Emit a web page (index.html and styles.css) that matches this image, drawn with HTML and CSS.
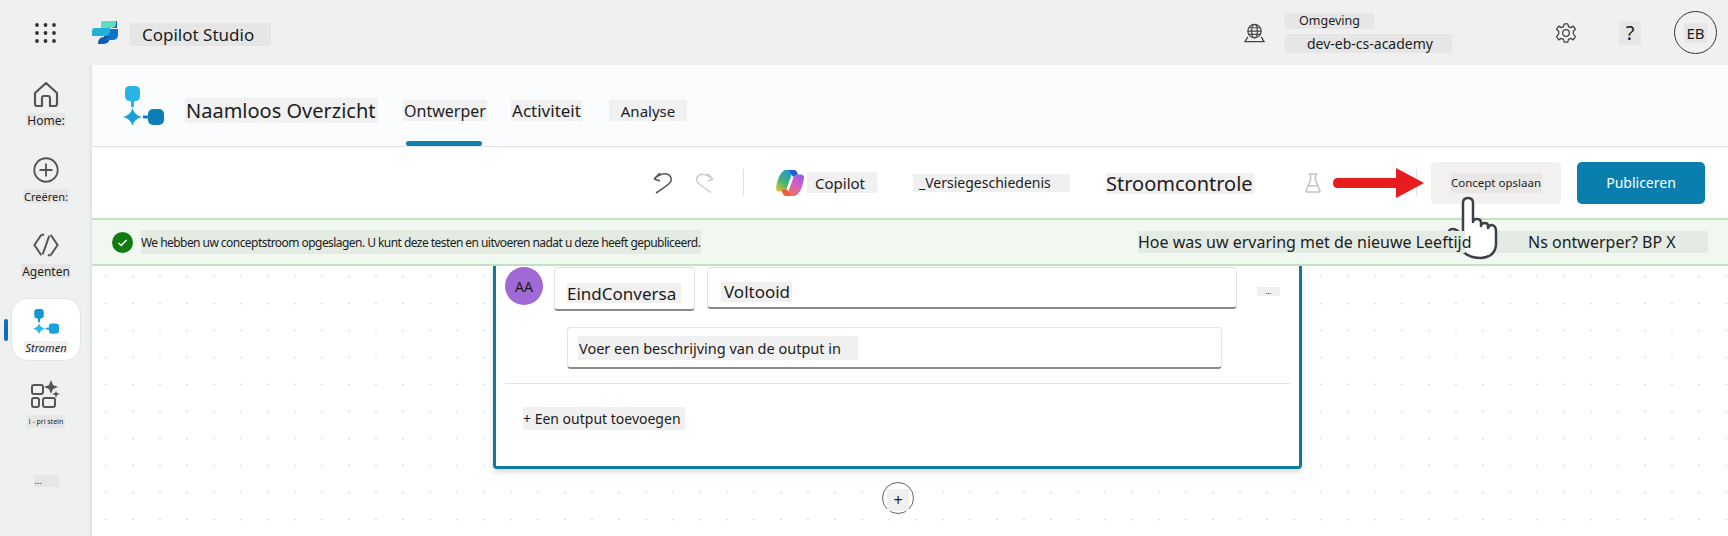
FILE: index.html
```html
<!DOCTYPE html>
<html lang="en">
<head>
    <meta charset="UTF-8">
    <meta name="viewport" content="width=device-width, initial-scale=1.0">
    <title>Copilot Studio</title>
    <link rel="stylesheet" href="styles.css">
</head>
<body>
    <header class="topbar">
        <svg class="waffle" viewBox="0 0 21 20" fill="#333">
            <circle cx="2" cy="2" r="1.9"/><circle cx="10.5" cy="2" r="1.9"/><circle cx="19" cy="2" r="1.9"/>
            <circle cx="2" cy="10" r="1.9"/><circle cx="10.5" cy="10" r="1.9"/><circle cx="19" cy="10" r="1.9"/>
            <circle cx="2" cy="18" r="1.9"/><circle cx="10.5" cy="18" r="1.9"/><circle cx="19" cy="18" r="1.9"/>
        </svg>
        <svg class="brand-logo" viewBox="0 0 26 23">
            <path d="M10 1 Q10 0 11 0 H25 V7 H18 V16 Q18 23 11 23 H6 Q6 16 12 16 V8 H10 Z" fill="#0a5cb4"/>
            <path d="M17 8 H26 V14 Q26 19 20 19 H14 Q17 16 17 13 Z" fill="#0b74c9"/>
            <path d="M9 2 Q9 0 11 0 H24 V3 Q24 7 19 7 H9 Z" fill="#5fdcc4"/>
            <path d="M3 7 H18 V10 Q18 15 13 15 H0 V10 Q0 7 3 7 Z" fill="#1fb3da"/>
        </svg>
        <span class="lbl brand-name">Copilot Studio</span>
        <svg class="globe" viewBox="0 0 22 20" fill="none" stroke="#444" stroke-width="1.3">
            <circle cx="11" cy="8" r="7"/>
            <ellipse cx="11" cy="8" rx="3" ry="7"/>
            <path d="M4 8 H18 M5 4.5 H17 M5 11.5 H17"/>
            <path d="M4 14 L1 19 H21 L18 14" />
        </svg>
        <div class="env">
            <span class="lbl env-label">Omgeving</span>
            <span class="lbl env-name">dev-eb-cs-academy</span>
        </div>
        <svg class="gear" viewBox="0 0 24 24" fill="none" stroke="#444" stroke-width="1.4">
            <path d="M10 2 H14 L14.7 5 L17.2 6.1 L19.9 4.5 L22.3 7.9 L20 10 V13 L22.3 15.9 L19.9 19.5 L17.2 17.9 L14.7 19 L14 22 H10 L9.3 19 L6.8 17.9 L4.1 19.5 L1.7 15.9 L4 13 V10 L1.7 7.9 L4.1 4.5 L6.8 6.1 L9.3 5 Z" stroke-linejoin="round"/>
            <circle cx="12" cy="12" r="3.6"/>
        </svg>
        <span class="lbl help">?</span>
        <div class="avatar"><span class="lbl">EB</span></div>
    </header>

    <div class="app">
        <nav class="sidebar">
            <div class="nav-item nav-home">
                <svg class="nav-icon" viewBox="0 0 26 26" fill="none" stroke="#555" stroke-width="2.2" stroke-linejoin="round">
                    <path d="M2 12 L13 2 L24 12 V23 Q24 25 22 25 H17 V17 Q17 15 15 15 H11 Q9 15 9 17 V25 H4 Q2 25 2 23 Z"/>
                </svg>
                <span class="lbl nav-label">Home:</span>
            </div>
            <div class="nav-item nav-create">
                <svg class="nav-icon" viewBox="0 0 28 28" fill="none" stroke="#555" stroke-width="2">
                    <circle cx="14" cy="14" r="12.6"/>
                    <path d="M14 7 V21 M7 14 H21"/>
                </svg>
                <span class="lbl nav-label small">Creëren:</span>
            </div>
            <div class="nav-item nav-agents">
                <svg class="nav-icon" viewBox="0 0 28 26" fill="none" stroke="#555" stroke-width="2.2" stroke-linejoin="round">
                    <path d="M9 2 L1.5 13 L9 24 M19 2 L26.5 13 L19 24"/>
                    <path d="M17.5 3 L10.5 23 M9 2 H12 M16 24 H19"/>
                </svg>
                <span class="lbl nav-label">Agenten</span>
            </div>
            <div class="nav-item nav-flows">
                <span class="nav-marker"></span>
                <svg class="nav-icon" viewBox="0 0 41 41">
                    <path d="M2 5 Q2 0 7 0 H12 Q17 0 17 5 V10 Q17 15 12 15 L11 16 V21 H8 V16 L7 15 Q2 15 2 10 Z" fill="#1497d4"/>
                    <path d="M9.5 22 Q11 29 19 31 Q11 33 9.5 40 Q8 33 0 31 Q8 29 9.5 22 Z" fill="#25bbe8"/>
                    <path d="M20 29.500 H26 V32.500 H20 Z" fill="#1aa0dc"/>
                    <rect x="25" y="23" width="16" height="16" rx="5" fill="#1aa0dc"/>
                </svg>
                <span class="lbl nav-label flows-label">Stromen</span>
            </div>
            <div class="nav-item nav-apps">
                <svg class="nav-icon apps-icon" viewBox="0 0 29 28" fill="none" stroke="#555" stroke-width="2">
                    <rect x="1" y="5" width="11" height="9" rx="2"/>
                    <rect x="1" y="18" width="7" height="9" rx="2"/>
                    <rect x="12" y="18" width="12" height="9" rx="2"/>
                    <path d="M20 0 L22 5 L27 7 L22 9 L20 14 L18 9 L13 7 L18 5 Z" fill="#555" stroke="none"/>
                    <path d="M25 11 L26 13 L29 14 L26 15 L25 18 L24 15 L21 14 L24 13 Z" fill="#555" stroke="none"/>
                </svg>
                <span class="lbl nav-label tiny">l - pri stein</span>
            </div>
            <div class="nav-item nav-more">
                <span class="lbl more-label">...</span>
            </div>
        </nav>

        <main class="main">
            <div class="flow-header">
                <svg class="flow-logo" viewBox="0 0 41 41">
                    <path d="M2 5 Q2 0 7 0 H12 Q17 0 17 5 V10 Q17 15 12 15 L11 16 V21 H8 V16 L7 15 Q2 15 2 10 Z" fill="#27b5e6"/>
                    <path d="M9.500 22 Q11 29 19 31 Q11 33 9.500 40 Q8 33 0 31 Q8 29 9.500 22 Z" fill="#1c9ed8"/>
                    <path d="M20 29.500 H26 V32.500 H20 Z" fill="#0e7fb5"/>
                    <rect x="25" y="23" width="16" height="16" rx="5" fill="#0e7fb5"/>
                </svg>
                <span class="lbl flow-title">Naamloos Overzicht</span>
                <span class="lbl tab tab-active">Ontwerper</span>
                <span class="lbl tab tab-activity">Activiteit</span>
                <span class="lbl tab tab-analysis">Analyse</span>
            </div>

            <div class="toolbar">
                <svg class="undo" viewBox="0 0 19 22" fill="none" stroke="#555" stroke-width="1.5">
                    <path d="M1 7 L7 1 M1 7 L7 9 M1 7 Q8 1 14 2 Q19 4 18 9 Q17 12 3 21"/>
                </svg>
                <svg class="redo" viewBox="0 0 19 22" fill="none" stroke="#c8c8c8" stroke-width="1.5">
                    <path d="M18 7 L12 1 M18 7 L12 9 M18 7 Q11 1 5 2 Q0 4 1 9 Q2 12 16 21"/>
                </svg>
                <span class="tool-divider div-first"></span>
                <svg class="copilot-icon" viewBox="0 0 30 30">
                    <defs>
                        <linearGradient id="cpA" x1="0" y1="1" x2="0.7" y2="0">
                            <stop offset="0" stop-color="#f2c230"/>
                            <stop offset="0.45" stop-color="#47b86a"/>
                            <stop offset="1" stop-color="#1d8fe0"/>
                        </linearGradient>
                        <linearGradient id="cpB" x1="0.2" y1="1" x2="0.9" y2="0">
                            <stop offset="0" stop-color="#f27a3a"/>
                            <stop offset="0.55" stop-color="#d55ec8"/>
                            <stop offset="1" stop-color="#8d5fe8"/>
                        </linearGradient>
                    </defs>
                    <path d="M10 1 H21 Q18 2 16 8 L11 22 Q10 24 7 24 H3 Q0 24 0 20 Q2 8 6 4 Q8 1 10 1 Z" fill="url(#cpA)"/>
                    <path d="M14 1 H20 Q23 2 24 8 H18 Z" fill="#1f5fd0"/>
                    <path d="M20 29 H9 Q12 28 14 22 L19 8 Q20 6 23 6 H27 Q30 6 30 10 Q28 22 24 26 Q22 29 20 29 Z" fill="url(#cpB)"/>
                    <path d="M6 22 H12 L16 29 H10 Q7 28 6 22 Z" fill="#f25c3a"/>
                </svg>
                <span class="lbl tool-copilot">Copilot</span>
                <span class="lbl tool-history">_Versiegeschiedenis</span>
                <span class="lbl tool-check">Stroomcontrole</span>
                <svg class="flask" viewBox="0 0 16 20" fill="none" stroke="#c4c4c4" stroke-width="1.6" stroke-linejoin="round">
                    <path d="M3.500 1 H12.500 M5.500 1 V7 L1 18 Q1 19 2 19 H14 Q15 19 15 18 L10.500 7 V1 M3 13 H13"/>
                </svg>
                <span class="tool-test">Test</span>
                <span class="tool-divider div-last"></span>
                <div class="btn btn-draft"><span class="lbl">Concept opslaan</span></div>
                <div class="btn btn-publish"><span class="publish-label">Publiceren</span></div>
            </div>

            <div class="banner">
                <svg class="banner-check" viewBox="0 0 21 21">
                    <circle cx="10.500" cy="10.500" r="10.500" fill="#107c10"/>
                    <path d="M6.500 11 L9.300 13.500 L14.500 8" fill="none" stroke="#fff" stroke-width="1.500"/>
                </svg>
                <span class="lbl banner-text">We hebben uw conceptstroom opgeslagen. U kunt deze testen en uitvoeren nadat u deze heeft gepubliceerd.</span>
                <span class="lbl banner-ask">Hoe was uw ervaring met de nieuwe Leeftijd</span>
                <span class="lbl banner-ask-end">Ns ontwerper? BP X</span>
            </div>

            <div class="canvas">
                <section class="card">
                    <div class="card-row">
                        <div class="card-avatar">AA</div>
                        <div class="field field-name"><span class="lbl">EindConversa</span></div>
                        <div class="field field-value"><span class="lbl">Voltooid</span></div>
                        <span class="lbl card-more">...</span>
                    </div>
                    <div class="field field-desc"><span class="lbl">Voer een beschrijving van de output in</span></div>
                    <div class="card-divider"></div>
                    <span class="lbl add-output">+ Een output toevoegen</span>
                </section>
                <div class="add-node"><span class="lbl">+</span></div>
            </div>
        </main>
    </div>

    <!-- annotation drawn on top of the screenshot -->
    <svg class="red-arrow" viewBox="0 0 91 30">
        <path d="M5 10 H63 V0 L91 15 L63 30 V20 H5 Q0 20 0 15 Q0 10 5 10 Z" fill="#e81c1c"/>
    </svg>
    <svg class="hand" viewBox="0 0 54 66">
        <path d="M18 42 V8 Q18 3 23 3 Q28 3 28 8 V27 Q28 24 32 24 Q36 24 36 28 V31 Q36 28 40 28 Q43 28 43 31 V33 Q44 30 47 30 Q51 31 51 36 V50 Q50 62 36 63 Q22 63 16 54 Q8 48 4 41 Q2 34 8 34 Q13 34 18 42 Z" fill="#fff" stroke="#3c4048" stroke-width="2.500" stroke-linejoin="round"/>
    </svg>
</body>
</html>
```

FILE: styles.css
```css
* {
    box-sizing: border-box;
}

body {
    margin: 0;
    width: 1728px;
    height: 536px;
    overflow: hidden;
    font-family: "Noto Sans", "Open Sans", sans-serif;
    color: #1c1c1c;
    background-color: #f0f0f0;
    display: flex;
    flex-direction: column;
}

svg {
    display: block;
    flex-shrink: 0;
}

.lbl {
    display: flex;
    align-items: center;
    flex-shrink: 0;
    white-space: nowrap;
    background-color: #e6e6e6;
}

/* top bar */
.topbar {
    height: 65px;
    display: flex;
    align-items: center;
    flex-shrink: 0;
    background-color: #f0f0f0;
}

.waffle {
    width: 21px;
    height: 20px;
    margin-left: 35px;
}

.brand-logo {
    width: 26px;
    height: 23px;
    margin-left: 36px;
}

.brand-name {
    width: 141px;
    height: 23px;
    margin-left: 12px;
    margin-top: 4px;
    padding-left: 12px;
    font-size: 17px;
}

.globe {
    width: 21px;
    height: 20px;
    margin-left: 973px;
}

.env {
    width: 167px;
    margin-left: 20px;
    display: flex;
    flex-direction: column;
    gap: 5px;
}

.env-label {
    width: 89px;
    height: 16px;
    padding-left: 14px;
    font-size: 12.500px;
}

.env-name {
    height: 19px;
    padding-left: 22px;
    font-size: 14px;
}

.gear {
    width: 22px;
    height: 22px;
    margin-left: 103px;
}

.help {
    width: 22px;
    height: 24px;
    margin-left: 42px;
    justify-content: center;
    font-size: 20px;
}

.avatar {
    width: 43px;
    height: 43px;
    margin-left: 33px;
    border: 1px solid #333;
    border-radius: 50%;
    display: flex;
    align-items: center;
    justify-content: center;
    font-size: 15px;
}

.avatar .lbl {
    padding: 0 2px;
}

/* sidebar */
.app {
    flex: 1;
    display: flex;
    min-height: 0;
}

.sidebar {
    width: 92px;
    flex-shrink: 0;
    display: flex;
    flex-direction: column;
    align-items: center;
    background-color: #eff0f0;
    box-shadow: inset -4px 0 4px -3px #dcdcdc;
}

.nav-item {
    display: flex;
    flex-direction: column;
    align-items: center;
}

.nav-icon {
    width: 26px;
    height: 26px;
}

.nav-label {
    height: 14px;
    margin-top: 6px;
    padding: 0 1px;
    font-size: 12px;
}

.nav-label.small {
    font-size: 11px;
}

.nav-label.tiny {
    height: 13px;
    margin-top: 7px;
    padding: 0 2px;
    font-size: 7px;
}

.nav-home {
    margin-top: 16px;
}

.nav-create {
    margin-top: 30px;
}

.nav-agents {
    margin-top: 29px;
}

.nav-flows {
    position: relative;
    width: 70px;
    height: 63px;
    margin-top: 20px;
    padding-top: 10px;
    background-color: #fff;
    border: 1px solid #e4e4e4;
    border-radius: 16px;
}

.nav-marker {
    position: absolute;
    left: -8px;
    top: 20px;
    width: 4px;
    height: 22px;
    border-radius: 2px;
    background-color: #0f6cbd;
}

.flows-label {
    height: 12px;
    margin-top: 6px;
    background-color: #f0f0f0;
    font-size: 11px;
    font-style: italic;
}

.nav-apps {
    margin-top: 19px;
}

.apps-icon {
    width: 29px;
    height: 28px;
}

.nav-more {
    margin-top: 47px;
}

.more-label {
    width: 25px;
    height: 12px;
    padding-left: 1px;
    align-items: flex-end;
    font-size: 9px;
    line-height: 12px;
}

/* flow header */
.main {
    flex: 1;
    min-width: 0;
    display: flex;
    flex-direction: column;
    background-color: #fff;
}

.flow-header {
    height: 82px;
    flex-shrink: 0;
    display: flex;
    align-items: center;
    padding-left: 31px;
    padding-bottom: 1px;
    background-color: #fbfcfe;
    border-bottom: 1px solid #e4e4e6;
}

.flow-header .lbl {
    background-color: #f1f1f1;
}

.flow-logo {
    width: 41px;
    height: 41px;
    margin-top: 3px;
}

.flow-title {
    width: 193px;
    height: 25px;
    margin-top: 11px;
    margin-left: 21px;
    padding-left: 1px;
    font-size: 20px;
}

.tab {
    height: 21px;
    margin-top: 11px;
    font-size: 16px;
}

.tab-active {
    position: relative;
    width: 84px;
    margin-left: 25px;
    justify-content: center;
}

.tab-active::after {
    content: "";
    position: absolute;
    left: 3px;
    right: 5px;
    top: 41px;
    height: 5px;
    border-radius: 3px;
    background-color: #0f7fae;
}

.tab-activity {
    width: 71px;
    margin-left: 24px;
    justify-content: center;
    font-size: 17px;
}

.tab-analysis {
    width: 78px;
    margin-left: 27px;
    justify-content: center;
    font-size: 15px;
}

/* toolbar */
.toolbar {
    height: 71px;
    flex-shrink: 0;
    display: flex;
    align-items: center;
    background-color: #fff;
}

.toolbar .lbl {
    background-color: #f0f0f0;
}

.undo {
    width: 19px;
    height: 22px;
    margin-left: 561px;
}

.redo {
    width: 18px;
    height: 22px;
    margin-left: 24px;
}

.tool-divider {
    width: 1px;
    flex-shrink: 0;
    background-color: #e0e0e0;
}

.div-first {
    height: 27px;
    margin-left: 29px;
}

.copilot-icon {
    width: 30px;
    height: 28px;
    margin-left: 31px;
}

.tool-copilot {
    width: 70px;
    height: 21px;
    margin-left: 2px;
    padding-left: 8px;
    font-size: 15px;
}

.tool-history {
    width: 157px;
    height: 18px;
    margin-left: 36px;
    padding-left: 6px;
    font-size: 14px;
}

.tool-check {
    width: 148px;
    height: 21px;
    margin-top: 2px;
    margin-left: 36px;
    font-size: 20px;
}

.flask {
    width: 16px;
    height: 20px;
    margin-left: 51px;
}

.tool-test {
    width: 31px;
    margin-left: 15px;
    font-size: 14px;
    font-weight: 600;
    color: #c4c4c4;
}

.div-last {
    height: 27px;
    margin-left: 49px;
}

.btn {
    height: 42px;
    display: flex;
    align-items: center;
    justify-content: center;
    flex-shrink: 0;
    border-radius: 5px;
}

.btn-draft {
    width: 130px;
    margin-left: 14px;
    background-color: #f2f1f0;
}

.toolbar .btn-draft .lbl {
    width: 91px;
    height: 20px;
    justify-content: center;
    font-size: 11.500px;
    background-color: #e8e7e6;
}

.btn-publish {
    width: 128px;
    margin-left: 16px;
    background-color: #0a7fad;
}

.publish-label {
    font-size: 14px;
    color: #fff;
}

/* message strip */
.banner {
    height: 48px;
    flex-shrink: 0;
    display: flex;
    align-items: center;
    background-color: #f1f8f1;
    border-top: 2px solid #c3e2c4;
    border-bottom: 2px solid #c3e2c4;
}

.banner .lbl {
    background-color: #e3ebe3;
}

.banner-check {
    width: 21px;
    height: 21px;
    margin-left: 20px;
}

.banner-text {
    width: 560px;
    height: 24px;
    margin-left: 8px;
    font-size: 12px;
    letter-spacing: -0.550px;
}

.banner-ask {
    position: relative;
    z-index: 2;
    width: 327px;
    height: 22px;
    margin-left: 437px;
    font-size: 16px;
}

.banner-ask-end {
    width: 243px;
    height: 22px;
    padding-left: 63px;
    font-size: 16px;
}

/* canvas and card */
.canvas {
    flex: 1;
    min-height: 0;
    overflow: hidden;
    padding-left: 401px;
    background-color: #fff;
    background-image: radial-gradient(circle, #d2d2d2 0.8px, transparent 1.1px);
    background-size: 27px 27px;
    background-position: 0.500px -3px;
}

.card {
    width: 809px;
    height: 203px;
    padding: 1px 0 0 9px;
    background-color: #fff;
    border: 3px solid #0e7a9e;
    border-top: 0;
    border-radius: 0 0 4px 4px;
    box-shadow: 0 3px 5px rgba(0, 0, 0, 0.15);
}

.card .lbl {
    background-color: #f0f0f0;
}

.card-row {
    display: flex;
    align-items: flex-start;
}

.card-avatar {
    width: 38px;
    height: 38px;
    flex-shrink: 0;
    display: flex;
    align-items: center;
    justify-content: center;
    border-radius: 50%;
    background-color: #a06ad6;
    font-size: 14px;
}

.field {
    flex-shrink: 0;
    display: flex;
    align-items: center;
    background-color: #fff;
    border: 1px solid #e3e3e3;
    border-bottom: 2px solid #8a8a8a;
    border-radius: 4px;
    font-size: 17px;
}

.field-name {
    width: 141px;
    height: 44px;
    margin-left: 11px;
    padding-left: 12px;
}

.field-name .lbl {
    width: 114px;
    height: 20px;
    margin-top: 9px;
}

.field-value {
    width: 530px;
    height: 42px;
    margin-left: 12px;
    padding-left: 13px;
}

.field-value .lbl {
    width: 71px;
    height: 20px;
    margin-top: 8px;
    padding-left: 3px;
}

.card-more {
    width: 23px;
    height: 9px;
    margin: 20px 0 0 20px;
    justify-content: center;
    font-size: 7px;
}

.field-desc {
    width: 655px;
    height: 42px;
    margin: 16px 0 0 62px;
    padding-left: 10px;
}

.field-desc .lbl {
    width: 280px;
    height: 24px;
    padding-left: 1px;
    font-size: 14.500px;
}

.card-divider {
    height: 1px;
    width: 786px;
    margin-top: 14px;
    background-color: #e2e2e2;
}

.add-output {
    width: 162px;
    height: 23px;
    margin: 23px 0 0 18px;
    font-size: 14px;
}

.add-node {
    width: 32px;
    height: 32px;
    margin: 13px 0 0 389px;
    display: flex;
    align-items: center;
    justify-content: center;
    background-color: #fff;
    border: 1px solid #666;
    border-radius: 50%;
    font-size: 16px;
}

.add-node .lbl {
    width: 22px;
    height: 22px;
    margin-top: 4px;
    justify-content: center;
    background-color: #f0f0f0;
}

/* annotation */
.red-arrow {
    position: absolute;
    left: 1333px;
    top: 168px;
    width: 91px;
    height: 30px;
}

.hand {
    position: absolute;
    left: 1445px;
    top: 195px;
    width: 54px;
    height: 66px;
    z-index: 1;
}
```
